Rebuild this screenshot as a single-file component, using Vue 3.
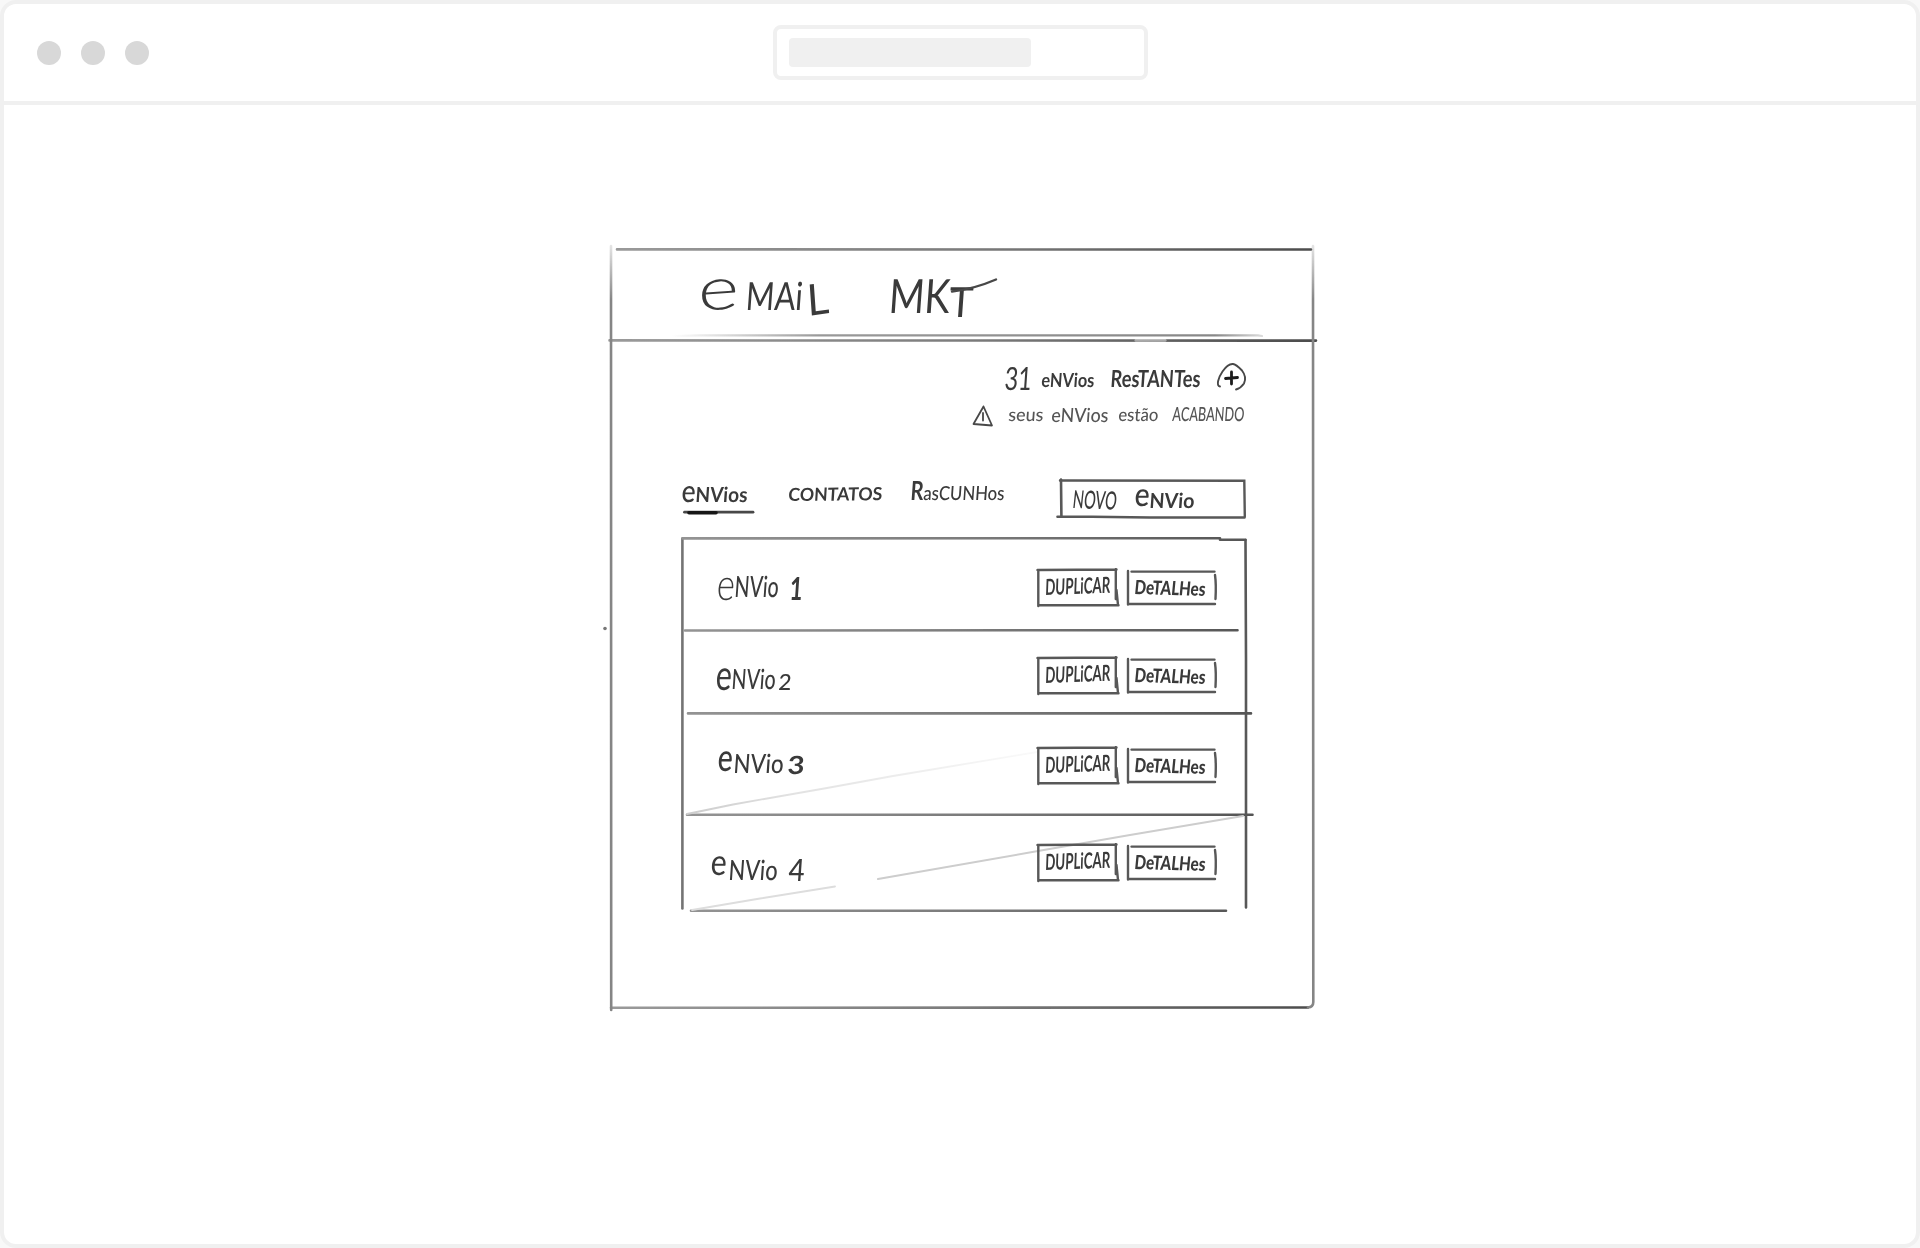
<script setup>
import { h } from 'vue'

// A hand-lettered label. Each run is [text, left, top, baseline, width, weight, kind, tilt];
// kind 'x' sizes the run by its x-height, otherwise by its cap height.
const Lettering = (props) => {
  const [bx, by, bw, bh] = props.box
  return h(
    'svg',
    { width: bw, height: bh, viewBox: `${bx} ${by} ${bw} ${bh}`, style: 'display:block;overflow:visible;flex:none' },
    props.runs.map(([text, x, top, base, width, weight = 400, kind = 'cap', tilt = 0]) =>
      h('text', {
        transform: `translate(${x} ${base}) rotate(${tilt}) skewX(-4)`,
        'font-size': ((base - top) / (kind === 'x' ? 0.52 : 0.72)).toFixed(1),
        'font-weight': weight,
        textLength: width,
        lengthAdjust: 'spacingAndGlyphs',
      }, text)
    )
  )
}
Lettering.props = ['box', 'runs']

const title = [
  ['e', 698, 280, 311, 41, 300, 'x', -4],
  ['MAi', 745, 282, 310, 57, 400],
  ['L', 808, 285, 316, 22, 400, 'cap', -8],
  ['MK', 888, 279, 313, 61, 400],
  ['T', 948, 287, 317, 24, 400],
]
const quota = [
  ['31', 1004, 367, 390, 27, 400],
  ['eNVios', 1041, 373, 387, 53, 700],
  ['ResTANTes', 1110, 370, 387, 90, 700],
]
const warning = [
  ['seus', 1008, 408, 421, 35, 500],
  ['eNVios', 1051, 408, 422, 57, 500],
  ['estão', 1118, 408, 421, 40, 500],
  ['ACABANDO', 1172, 407, 421, 72, 500],
]
const tabs = [
  { box: [682, 476, 66, 44], runs: [['e', 681, 486, 502, 14, 500, 'x'], ['NVios', 695, 487, 502, 52, 700]] },
  { box: [789, 476, 94, 44], runs: [['CONTATOS', 788, 488, 501, 94, 700, 'cap', -0.5]] },
  { box: [911, 476, 94, 44], runs: [['R', 910, 481, 500, 13, 700], ['asCUNHos', 923, 486, 500, 81, 500]] },
]
const novo = [
  ['NOVO', 1072, 490, 508, 44, 500, 'cap', 2],
  ['e', 1134, 489, 506, 15, 500, 'x'],
  ['NVio', 1149, 493, 508, 45, 700],
]
const rows = [
  { top: 538, height: 92, offset: 30, runs: [['e', 716, 577, 600, 18, 300, 'x'], ['NVio', 734, 576, 597, 44, 500], ['1', 789, 577, 600, 13, 700]] },
  { top: 630, height: 83, offset: 26, runs: [['e', 715, 668, 690, 16, 400, 'x'], ['NVio', 731, 669, 689, 44, 500], ['2', 778, 674, 690, 13, 500]] },
  { top: 713, height: 101, offset: 33, runs: [['e', 717, 751, 771, 15, 500, 'x'], ['NVio', 733, 754, 773, 50, 500], ['3', 787, 756, 774, 17, 700]] },
  { top: 814, height: 97, offset: 29, runs: [['e', 710, 856, 875, 16, 400, 'x'], ['NVio', 728, 860, 880, 49, 500], ['4', 788, 859, 881, 16, 500]] },
]
const duplicar = [['DUPLiCAR', 9, 11, 27, 65, 700, 'cap', -2]]
const detalhes = [['DeTALHes', 8, 12, 26, 71, 900, 'cap', 1.5]]
</script>

<template>
  <div class="window">
    <header class="bar">
      <div class="dots"><i></i><i></i><i></i></div>
      <div class="address"><span></span></div>
    </header>
    <main class="stage">
      <section class="sheet">
        <svg class="strokes" width="850" height="780" viewBox="590 240 850 780">
          <defs>
            <linearGradient id="fade" x1="672" x2="1262" y1="0" y2="0" gradientUnits="userSpaceOnUse">
              <stop offset="0" stop-color="#999" stop-opacity="0" />
              <stop offset=".25" stop-color="#999" />
              <stop offset=".92" stop-color="#888" />
              <stop offset="1" stop-color="#888" stop-opacity=".3" />
            </linearGradient>
            <linearGradient id="tone" x1="610" x2="1314" y1="0" y2="0" gradientUnits="userSpaceOnUse">
              <stop offset="0" stop-color="#9a9a9a" />
              <stop offset=".5" stop-color="#7c7c7c" />
              <stop offset="1" stop-color="#4c4c4c" />
            </linearGradient>
            <linearGradient id="trail" x1="686" x2="1040" y1="0" y2="0" gradientUnits="userSpaceOnUse">
              <stop offset="0" stop-color="#ccc" />
              <stop offset=".3" stop-color="#e2e2e2" />
              <stop offset="1" stop-color="#fafafa" />
            </linearGradient>
            <linearGradient id="edge" x1="0" x2="0" y1="244" y2="300" gradientUnits="userSpaceOnUse">
              <stop offset="0" stop-color="#888" stop-opacity=".2" />
              <stop offset="1" stop-color="#858585" />
            </linearGradient>
          </defs>
          <g fill="none" stroke-width="2.6" stroke-linecap="round">
            <path d="M617 249.400L1311 249.500M609.500 340.400L1316 340.600M611 1007.800L1308 1007.500" stroke="url(#tone)" />
            <path d="M611 246L611.200 1010M1313 246L1313.300 1002Q1313.300 1007 1308 1007.500" stroke="url(#edge)" />
            <path d="M672 336L700 335.400H1258L1262 336" stroke="url(#fade)" stroke-width="2.2" />
            <path d="M682.400 538.500V908.500" stroke="#747474" />
            <path d="M1245.500 540L1246 660V907.500" stroke="#585858" />
            <path d="M682.500 538.400L1220 538.200M1220 539.700H1245.500M685 630.500L1237.500 630.200M688 713.400H1251M687 814.700H1252.500M691 910.800H1226" stroke="url(#tone)" />
            <path d="M687 814L733 804.500L827 788L893 776L1037 752" stroke="url(#trail)" stroke-width="1.8" />
            <path d="M692 910L760 898.500L835 886.500" stroke="#ddd" stroke-width="1.8" />
            <path d="M878 879L1038 851L1130 835L1243 816" stroke="#cdcdcd" stroke-width="2" />
            <path d="M1136 340.200H1165" stroke="#fff" stroke-opacity=".45" stroke-width="3" />
            <path d="M684.500 512.200H753" stroke="#484848" stroke-width="2.8" />
            <path d="M689 512.800H716" stroke="#161616" stroke-width="3.600" />
            <path d="M952 291.500Q974 289 996 279.500" stroke="#484848" stroke-width="2.400" />
          </g>
          <circle cx="605" cy="628.500" r="1.800" fill="#777" />
        </svg>

        <h1 class="title"><Lettering :box="[699, 275, 300, 45]" :runs="title" /></h1>

        <div class="body">
          <div class="quota">
            <Lettering :box="[1004, 362, 196, 31]" :runs="quota" />
            <svg class="ink" width="34" height="31" viewBox="0 0 34 31">
              <path d="M4 24.500C0 24 2 16 6.500 9.500Q12 1.500 17 2Q20 2.300 26 8.500Q31 15 28 21.500Q25 26 20 27.500" stroke-width="1.900" />
              <path d="M15.500 10V22M9.500 16.500L21.500 15.500" stroke="#1c1c1c" stroke-width="2.800" />
            </svg>
          </div>
          <div class="warning">
            <svg class="ink" width="24" height="27" viewBox="0 0 24 27">
              <path d="M12.500 4.500L2.500 22L21 23.500L12.500 4.500M12 11V18.500" stroke-width="1.800" />
            </svg>
            <Lettering :box="[1007, 402, 237, 27]" :runs="warning" />
          </div>

          <nav class="tabs">
            <a v-for="tab in tabs" :key="tab.box[0]"><Lettering :box="tab.box" :runs="tab.runs" /></a>
            <button class="novo">
              <svg class="frame" width="190" height="44" viewBox="1056 476 190 44">
                <path d="M1060 480.500L1244.300 480.700L1244.800 516.500" />
                <path d="M1061 479.500L1061.400 516M1057.500 516.800H1092L1150 517.500H1244.500" stroke-width="2.600" />
              </svg>
              <Lettering :box="[1056, 476, 190, 44]" :runs="novo" />
            </button>
          </nav>

          <ul class="list">
            <li v-for="row in rows" :key="row.top" :style="{ height: row.height + 'px' }">
              <Lettering :box="[709, row.top, 110, row.height]" :runs="row.runs" />
              <div class="actions" :style="{ paddingTop: row.offset + 'px' }">
                <button>
                  <svg class="frame" width="84" height="40" viewBox="0 0 84 40">
                    <path d="M1.500 2L80.500 1.500M2.300 2V38M3 37.300H82.500M79.800 1V31M80.500 22L82 37" />
                  </svg>
                  <Lettering :box="[0, 0, 84, 40]" :runs="duplicar" />
                </button>
                <button>
                  <svg class="frame" width="92" height="40" viewBox="0 0 92 40">
                    <path d="M5.500 3.600H88.500M2 3V36.500M2 36H89M89 7Q90.300 16 89.500 31" />
                  </svg>
                  <Lettering :box="[0, 0, 92, 40]" :runs="detalhes" />
                </button>
              </div>
            </li>
          </ul>
        </div>
      </section>
    </main>
  </div>
</template>

<style>
body { margin: 0; background: #f8f8f8; }
</style>

<style scoped>
.window {
  box-sizing: border-box;
  width: 1920px;
  height: 1248px;
  border: 4px solid #f0f0f0;
  border-radius: 16px;
  background: #fff;
  overflow: hidden;
}
.bar {
  box-sizing: border-box;
  display: flex;
  align-items: flex-start;
  height: 101px;
  border-bottom: 4px solid #f0f0f0;
}
.dots { display: flex; gap: 20px; padding: 37px 0 0 33px; }
.dots i { width: 24px; height: 24px; border-radius: 50%; background: #d8d8d8; }
.address {
  box-sizing: border-box;
  width: 375px;
  height: 55px;
  margin: 21px 0 0 624px;
  padding: 9px 12px;
  border: 4px solid #f0f0f0;
  border-radius: 8px;
}
.address span { display: block; width: 242px; height: 29px; border-radius: 4px; background: #f0f0f0; }
.stage { padding-top: 143px; }
.sheet {
  position: relative;
  width: 704px;
  height: 762px;
  margin-left: 606px;
  font-family: Lato, "Open Sans", sans-serif;
  fill: #3a3a3a;
  filter: blur(0.6px);
}
.strokes { position: absolute; left: -20px; top: -8px; pointer-events: none; }
.title { box-sizing: border-box; height: 93px; margin: 0; padding: 27px 0 0 89px; }
.body { padding: 21px 68px 0 72px; }
.ink { display: block; flex: none; fill: none; stroke: #484848; stroke-linecap: round; stroke-linejoin: round; }
.quota { display: flex; justify-content: flex-end; gap: 16px; margin-right: -4px; }
.warning { display: flex; justify-content: flex-end; gap: 12px; margin: 9px 2px 0 0; fill: #555; }
.tabs { display: flex; margin-top: 47px; }
.tabs a { margin-right: 41px; }
.tabs a + a { margin-right: 28px; }
.tabs a:nth-of-type(3) { margin-right: 51px; }
button { position: relative; flex: none; padding: 0; border: 0; background: none; fill: inherit; font: inherit; }
.frame { position: absolute; left: 0; top: 0; fill: none; stroke: #585858; stroke-width: 2.4; stroke-linecap: round; }
.list { width: 564px; margin: 18px 0 0; padding: 0; list-style: none; }
.list li { display: flex; justify-content: space-between; padding: 0 28px 0 27px; }
.actions { display: flex; align-items: flex-start; gap: 6px; }
</style>
